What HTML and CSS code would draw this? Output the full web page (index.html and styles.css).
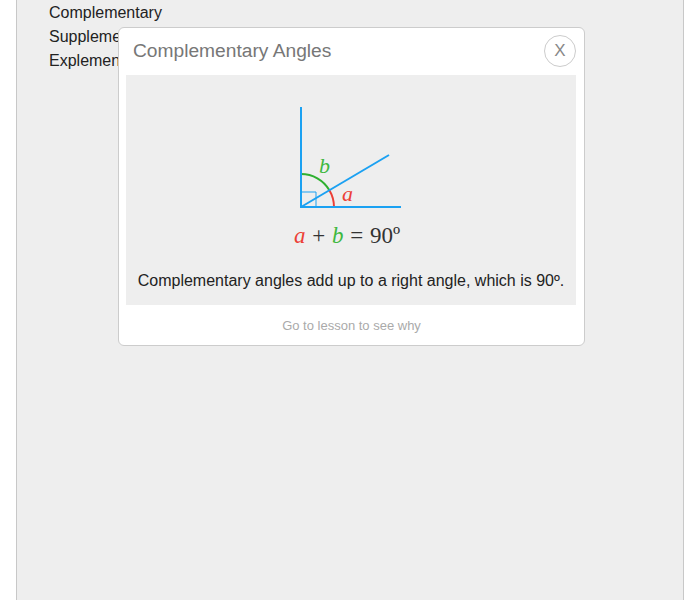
FILE: index.html
```html
<!DOCTYPE html>
<html>
<head>
<meta charset="utf-8">
<link rel="stylesheet" href="styles.css">
</head>
<body>
<div class="panel">
  <ul class="terms">
    <li>Complementary</li>
    <li>Supplementary</li>
    <li>Explementary</li>
  </ul>
  <div class="modal">
    <div class="modal-head">
      <span class="modal-title">Complementary Angles</span>
      <span class="close">X</span>
    </div>
    <div class="modal-body">
      <svg class="diagram" width="120" height="150" viewBox="1 0 120 150">
        <path d="M11 92 H26 V107" fill="none" stroke="#1ba1f2" stroke-width="1"/>
        <path d="M11 74 A33 33 0 0 1 39.4 90.2" fill="none" stroke="#2fb02f" stroke-width="2"/>
        <path d="M39.4 90.2 A33 33 0 0 1 44 107" fill="none" stroke="#ec3f36" stroke-width="2"/>
        <path d="M11 7 V107 H111" fill="none" stroke="#1ba1f2" stroke-width="2"/>
        <path d="M11 107 L99 55" fill="none" stroke="#1ba1f2" stroke-width="2"/>
        <text x="29" y="73" class="lbl green">b</text>
        <text x="52" y="101" class="lbl red">a</text>
        <text x="57" y="143" text-anchor="middle" class="eq"><tspan class="red">a</tspan><tspan class="op"> + </tspan><tspan class="green">b</tspan><tspan class="op"> = 90º</tspan></text>
      </svg>
      <p class="desc">Complementary angles add up to a right angle, which is 90º.</p>
    </div>
    <div class="modal-foot">Go to lesson to see why</div>
  </div>
</div>
</body>
</html>
```

FILE: styles.css
```css
html, body {
  margin: 0;
  padding: 0;
  background: #fff;
}
body {
  font-family: "Liberation Sans", Arial, sans-serif;
  color: #222;
}
.panel {
  position: relative;
  margin-left: 16px;
  width: 666px;
  min-height: 600px;
  background: #eee;
  border-left: 1px solid #c8c8c8;
  border-right: 1px solid #c8c8c8;
}
.terms {
  list-style: none;
  margin: 0;
  padding: 1px 0 0 32px;
  font-size: 16px;
  line-height: 24px;
}
.modal {
  position: absolute;
  top: 27px;
  left: 101px;
  width: 465px;
  background: #fff;
  border: 1px solid #ccc;
  border-radius: 6px;
}
.modal-head {
  display: flex;
  align-items: center;
  justify-content: space-between;
  height: 45px;
  padding: 0 8px 2px 14px;
}
.modal-title {
  font-size: 19.2px;
  color: #777;
  margin-top: 1px;
}
.close {
  width: 30px;
  height: 30px;
  border: 1px solid #ccc;
  border-radius: 50%;
  display: flex;
  align-items: center;
  justify-content: center;
  font-size: 17px;
  color: #888;
  margin-top: 1px;
}
.modal-body {
  margin: 0 8px 0 7px;
  background: #eee;
  padding: 25px 0 14px;
  display: flex;
  flex-direction: column;
  align-items: center;
}
.diagram {
  display: block;
}
.lbl {
  font-family: "Liberation Serif", "Times New Roman", serif;
  font-style: italic;
  font-size: 22px;
}
.eq {
  font-family: "Liberation Serif", "Times New Roman", serif;
  font-size: 23px;
  word-spacing: 1px;
}
.eq .red, .eq .green {
  font-style: italic;
}
.red { fill: #ec3f36; }
.green { fill: #3fb83f; }
.op { fill: #333; }
.desc {
  margin: 21px 0 0;
  font-size: 16px;
  line-height: 20px;
  color: #222;
  text-align: center;
}
.modal-foot {
  height: 40px;
  display: flex;
  align-items: center;
  justify-content: center;
  font-size: 13px;
  color: #aaa;
}
```
